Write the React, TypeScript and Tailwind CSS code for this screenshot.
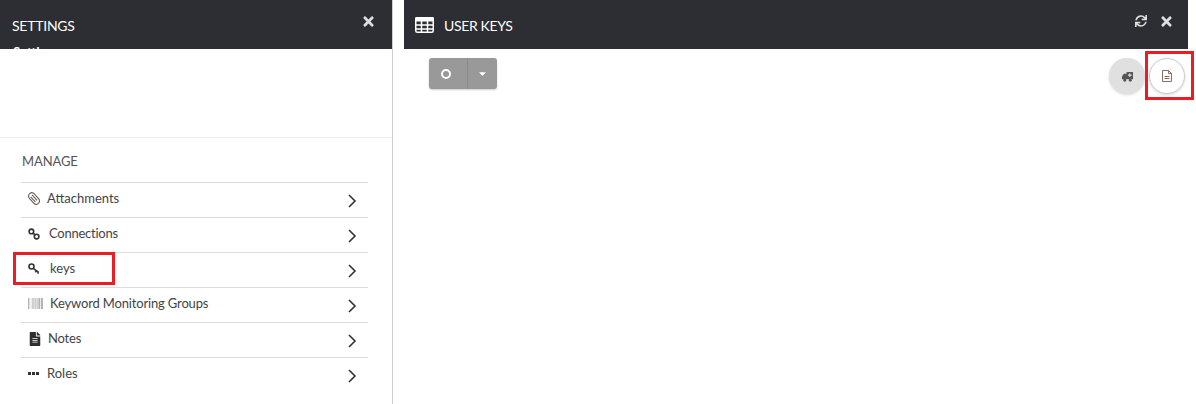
import React from "react";
import { FaTimes, FaSync, FaBarcode, FaFileAlt, FaCaretDown } from "react-icons/fa";

const ClipIcon = () => (
  <svg width="12" height="13" viewBox="0 0 12 13" fill="none" stroke="#6b5f55" strokeWidth="1.1">
    <g transform="rotate(-42 6 6.500)">
      <rect x="2.700" y="0" width="6.600" height="13" rx="3.300" />
      <path d="M4.700 3v7M7 2.500v7.500" />
    </g>
  </svg>
);
const LinkIcon = () => (
  <svg width="12" height="12" viewBox="0 0 12 12" fill="none" stroke="#333" strokeWidth="1.6">
    <circle cx="3.4" cy="3.4" r="2.3" />
    <circle cx="8.6" cy="8.6" r="2.3" />
    <path d="M4.6 4.6l2.8 2.8" />
  </svg>
);
const KeyIcon = () => (
  <svg width="12" height="12" viewBox="0 0 12 12" fill="none" stroke="#333" strokeWidth="1.6">
    <circle cx="3.5" cy="3.5" r="2.5" />
    <path d="M5.3 5.3l5.4 4M8.3 7.6L7.4 9.4M10.4 9.2l-.7 1.5" />
  </svg>
);
const BarIcon = () => <FaBarcode className="text-[15px] text-[#9a9a9a]" />;
const NoteIcon = () => <FaFileAlt className="text-[14px] text-[#2e2e2e]" />;
const DotsIcon = () => (
  <svg width="11" height="3" viewBox="0 0 11 3" fill="#333">
    <rect x="0" width="3" height="3" />
    <rect x="4" width="3" height="3" />
    <rect x="8" width="3" height="3" />
  </svg>
);

const rows = [
  { label: "Attachments", Icon: ClipIcon, gap: "w-[19px]", text: "tracking-normal" },
  { label: "Connections", Icon: LinkIcon, gap: "w-[21px]", text: "tracking-[-0.25px]" },
  { label: "keys", Icon: KeyIcon, gap: "w-[22px]", text: "tracking-normal" },
  { label: "Keyword Monitoring Groups", Icon: BarIcon, gap: "w-[22px]", text: "tracking-[-0.16px]" },
  { label: "Notes", Icon: NoteIcon, gap: "w-[20px]", text: "tracking-[-0.2px]" },
  { label: "Roles", Icon: DotsIcon, gap: "w-[19px]", text: "tracking-normal" },
];

export default function App() {
  return (
    <div className="relative flex h-[404px] w-[1196px] overflow-hidden bg-white font-['Lato','Open_Sans',sans-serif] text-[#333]">
      <aside className="flex h-full w-[393px] shrink-0 flex-col border-r border-[#ccc]">
        <header className="relative h-[49px] shrink-0 overflow-hidden bg-[#2c2e33] px-[12px] text-white">
          <h2 className="pt-[17px] text-[14px] leading-[18px] tracking-[-0.25px]">SETTINGS</h2>
          <div className="pl-[1px] pt-[9px] text-[13px] font-bold leading-[16px]">Settings</div>
          <FaTimes className="absolute right-[16px] top-[14px] text-[15px] text-[#ddd]" />
        </header>
        <div className="h-[89px] shrink-0 border-b border-[#eee]" />
        <section className="px-[21px]">
          <h3 className="pl-[1px] pt-[15px] pb-[12px] text-[13px] leading-[17px] tracking-[-0.1px] text-[#555]">MANAGE</h3>
          <ul className="w-[347px]">
            {rows.map(({ label, Icon, gap, text }) => (
              <li key={label} className="flex h-[35px] items-center border-t border-[#ddd] pl-[7px] pr-[11px]">
                <span className={`flex shrink-0 items-center ${gap} mb-[3px]`}>
                  <Icon />
                </span>
                <span className={`mb-[4px] flex-1 text-[13px] leading-[18px] text-[#444] ${text}`}>{label}</span>
                <svg width="10" height="14" viewBox="0 0 10 14" className="mt-[1px]" fill="none" stroke="#333" strokeWidth="1.6">
                  <path d="M2 1l6 6-6 6" />
                </svg>
              </li>
            ))}
          </ul>
        </section>
      </aside>

      <main className="ml-[11px] flex w-[784px] shrink-0 flex-col">
        <header className="relative flex h-[49px] shrink-0 items-center bg-[#2c2e33] pl-[11px] text-white">
          <svg width="19" height="16" viewBox="0 0 19 16" fill="none" stroke="#fff" strokeWidth="1.5">
            <rect x="0.750" y="0.750" width="17.500" height="14.500" rx="1.500" fill="#2c2e33" />
            <rect x="0" y="0" width="19" height="4.500" rx="1.500" fill="#fff" stroke="none" />
            <path d="M0 8h19M0 12h19M6.500 4v12M12.500 4v12" />
          </svg>
          <h1 className="ml-[10px] mt-[2px] text-[14px] leading-[18px] tracking-[-0.35px]">USER KEYS</h1>
          <FaSync className="absolute right-[41px] top-[15px] text-[12px] text-[#ddd]" />
          <FaTimes className="absolute right-[14px] top-[14px] text-[15px] text-[#ddd]" />
        </header>
        <div className="relative flex items-start justify-between">
          <div className="ml-[25px] mt-[9px] flex h-[31px] w-[68px] overflow-hidden rounded-[3px] bg-[#999] text-white shadow-[0_1px_2px_rgba(0,0,0,0.2)]">
            <span className="flex w-[39px] items-center justify-center border-r border-[#8a8a8a] pr-[5px]">
              <span className="h-[10px] w-[10px] rounded-full border-2 border-white" />
            </span>
            <span className="flex flex-1 items-center justify-center">
              <FaCaretDown className="text-[11px]" />
            </span>
          </div>
          <div className="absolute left-[705px] top-[9px] flex gap-[4px]">
            <span className="flex h-[36px] w-[36px] items-center justify-center rounded-full bg-[#e0e0e0] shadow-[0_1px_3px_rgba(0,0,0,0.15)]">
              <svg width="11" height="11" viewBox="0 0 12 12">
                <path fill="#555" d="M5 1h7v8H0V6l2-3h3z" />
                <circle cx="3" cy="10" r="1.600" fill="#555" />
                <circle cx="9" cy="10" r="1.600" fill="#555" />
                <path stroke="#e0e0e0" strokeWidth="1.200" d="M8.500 2.500v4M6.500 4.500h4" />
              </svg>
            </span>
            <span className="flex h-[36px] w-[36px] items-center justify-center rounded-full border border-[#ccc] bg-white shadow-[0_1px_3px_rgba(0,0,0,0.15)]">
              <svg width="10" height="12" viewBox="0 0 10 12" fill="none" stroke="#8a6d5a">
                <path d="M1 .5h5.500L9.500 3.500V11.500H.5V.5z" />
                <path d="M6.500.5v3h3M2.500 6.500h5M2.500 8.500h5" />
              </svg>
            </span>
          </div>
        </div>
      </main>

      <div className="absolute left-[13px] top-[252px] h-[33px] w-[102px] border-[3px] border-[#ed1c24]" />
      <div className="absolute left-[1145px] top-[51px] h-[49px] w-[49px] border-[3px] border-[#ed1c24]" />
    </div>
  );
}
